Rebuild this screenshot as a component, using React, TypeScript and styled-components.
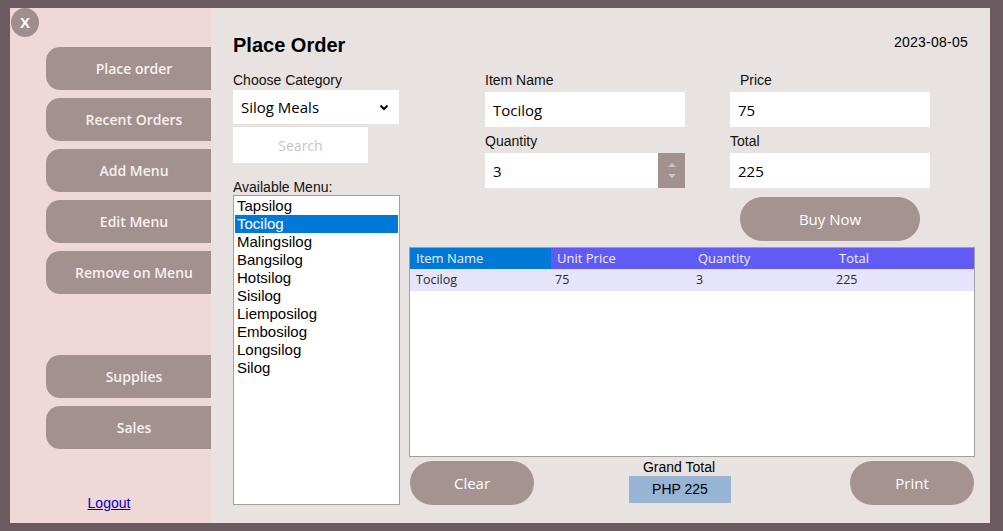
import React from "react";
import styled, { createGlobalStyle } from "styled-components";

const Global = createGlobalStyle`
  html, body { margin: 0; padding: 0; background: #6b5a5f; }
  * { box-sizing: border-box; }
`;

const Frame = styled.div`
  width: 1003px;
  height: 531px;
  background: #6b5a5f;
  padding: 8px 13px 8px 10px;
  display: flex;
  overflow: hidden;
`;

const Sidebar = styled.aside`
  width: 201px;
  flex: none;
  background: #efd8d5;
  display: flex;
  flex-direction: column;
  overflow: hidden;
`;

const CloseButton = styled.button`
  width: 28px;
  height: 29px;
  margin-left: 1px;
  border-radius: 50%;
  border: none;
  padding: 0;
  background: #a08e8e;
  color: #fff;
  font: bold 15px/29px "Liberation Sans", Arial, sans-serif;
  text-align: center;
`;

const NavList = styled.nav`
  display: flex;
  flex-direction: column;
  align-items: flex-start;
  gap: 8px;
  margin-top: 10px;
  padding-left: 36px;
`;

const NavButton = styled.button<{ $spaced?: boolean }>`
  flex: none;
  width: 176px;
  height: 43px;
  border: none;
  border-radius: 14px 0 0 14px;
  background: #a39190;
  color: #f8f0ef;
  font: 600 14px "Open Sans", sans-serif;
  padding: 0;
  margin-top: ${(p) => (p.$spaced ? "53px" : "0")};
`;

const LogoutLink = styled.a`
  margin-top: auto;
  padding-bottom: 12px;
  align-self: center;
  margin-left: -3px;
  font: 14px/16px "Liberation Sans", Arial, sans-serif;
  color: #0000c8;
  text-decoration: underline;
`;

const Main = styled.main`
  flex: 1;
  background: #e8e3e0;
  padding: 25px 15px 18px 22px;
  display: flex;
  flex-direction: column;
`;

const Header = styled.header`
  display: flex;
  justify-content: space-between;
  align-items: flex-start;
  height: 24px;
`;

const Title = styled.h1`
  margin: 0;
  font: bold 20px/24px "Liberation Sans", Arial, sans-serif;
  color: #000;
`;

const DateText = styled.span`
  margin: 1px 7px 0 0;
  font: 14px/16px "Liberation Sans", Arial, sans-serif;
  letter-spacing: 0.25px;
  color: #000;
`;

const Body = styled.div`
  display: flex;
  gap: 9px;
  margin-top: 15px;
  flex: 1;
  min-height: 0;
`;

const LeftCol = styled.section`
  width: 167px;
  flex: none;
  display: flex;
  flex-direction: column;
`;

const Label = styled.label<{ $indent?: number; $top?: number }>`
  display: block;
  font: 14px/16px "Liberation Sans", Arial, sans-serif;
  color: #111;
  padding-left: ${(p) => p.$indent ?? 0}px;
  margin-top: ${(p) => p.$top ?? 0}px;
`;

const SelectBox = styled.div`
  margin-top: 2px;
  width: 166px;
  height: 34px;
  background: #fff;
  display: flex;
  align-items: center;
  justify-content: space-between;
  padding: 0 10px 0 8px;
  font: 15px "Open Sans", sans-serif;
  color: #000;
`;

const SearchInput = styled.input`
  margin-top: 3px;
  width: 135px;
  height: 36px;
  border: none;
  background: #fff;
  text-align: center;
  font: 14px "Open Sans", sans-serif;
  outline: none;
  &::placeholder { color: #c4c4c4; }
`;

const MenuList = styled.ul`
  list-style: none;
  margin: 0;
  flex: 1;
  border: 1px solid #a0a0a0;
  background: #fff;
  padding: 1px;
`;

const MenuItem = styled.li<{ $selected?: boolean }>`
  height: 18px;
  padding-left: 2px;
  font: 15px/18px "Liberation Sans", Arial, sans-serif;
  background: ${(p) => (p.$selected ? "#0078d7" : "transparent")};
  color: ${(p) => (p.$selected ? "#fff" : "#000")};
`;

const RightCol = styled.section`
  width: 566px;
  flex: none;
  display: flex;
  flex-direction: column;
`;

const FormGrid = styled.div`
  display: grid;
  grid-template-columns: 200px 200px;
  column-gap: 45px;
  row-gap: 6px;
  padding-left: 76px;
`;

const Field = styled.div`
  display: flex;
  flex-direction: column;
  gap: 4px;
`;

const TextInput = styled.input`
  width: 100%;
  height: 35px;
  border: none;
  background: #fff;
  padding: 0 9px 0 8px;
  font: 15px "Open Sans", sans-serif;
  color: #000;
  outline: none;
`;

const NumberBox = styled.div`
  display: flex;
  width: 200px;
  height: 35px;
  background: #fff;
`;

const NumberInput = styled(TextInput)`
  flex: 1;
  width: auto;
  min-width: 0;
`;

const Spinner = styled.div`
  width: 27px;
  flex: none;
  background: #a39190;
  display: flex;
  flex-direction: column;
  align-items: center;
  justify-content: center;
  gap: 7px;
`;

const PillButton = styled.button<{ $w: number }>`
  width: ${(p) => p.$w}px;
  height: 44px;
  flex: none;
  border: none;
  border-radius: 22px;
  background: #a59391;
  color: #fff;
  font: 15px "Open Sans", sans-serif;
  padding: 0;
`;

const BuyRow = styled.div`
  margin-top: 9px;
  padding-left: 331px;
`;

const Table = styled.div`
  margin-top: 6px;
  height: 210px;
  border: 1px solid #a0a0a0;
  background: #fff;
`;

const TableRow = styled.div<{ $head?: boolean }>`
  display: grid;
  grid-template-columns: repeat(4, 141px);
  height: ${(p) => (p.$head ? 21 : 22)}px;
  background: ${(p) => (p.$head ? "#625af5" : "#e6e4fa")};
`;

const HeadCell = styled.div<{ $active?: boolean }>`
  padding-left: 6px;
  font: 13px/21px "Open Sans", sans-serif;
  color: #eeeeff;
  background: ${(p) => (p.$active ? "#0078d7" : "transparent")};
`;

const Cell = styled.div<{ $pad: number }>`
  padding-left: ${(p) => p.$pad}px;
  font: 12.5px/22px "Open Sans", sans-serif;
  color: #2a2a2a;
`;

const Footer = styled.div`
  margin-top: 2px;
  display: flex;
  align-items: flex-start;
`;

const FooterButton = styled(PillButton)`
  margin-top: 2px;
`;

const GrandBlock = styled.div`
  width: 102px;
  margin-left: 95px;
  text-align: center;
`;

const GrandLabel = styled.div`
  font: 14px/16px "Liberation Sans", Arial, sans-serif;
  color: #000;
  margin-left: -2px;
`;

const GrandValue = styled.div`
  margin-top: 1px;
  height: 27px;
  background: #98b4d4;
  font: 14px/27px "Liberation Sans", Arial, sans-serif;
  color: #000;
`;

const LeftSlot = styled.div`
  margin-left: 1px;
`;

const PushRight = styled.div`
  margin-left: auto;
  margin-right: 1px;
`;

const menu = [
  "Tapsilog",
  "Tocilog",
  "Malingsilog",
  "Bangsilog",
  "Hotsilog",
  "Sisilog",
  "Liemposilog",
  "Embosilog",
  "Longsilog",
  "Silog",
];

const Chevron = () => (
  <svg width="10" height="7" viewBox="0 0 10 7">
    <path d="M1.5 1.5 L5 5 L8.5 1.5" fill="none" stroke="#000" strokeWidth="2" />
  </svg>
);

const Tri = ({ up }: { up?: boolean }) => (
  <svg width="8" height="4" viewBox="0 0 8 4">
    <path d={up ? "M0 4 L4 0 L8 4 Z" : "M0 0 L4 4 L8 0 Z"} fill="#cfc4c4" />
  </svg>
);

export default function App() {
  return (
    <>
      <Global />
      <Frame>
        <Sidebar>
          <CloseButton>X</CloseButton>
          <NavList>
            <NavButton>Place order</NavButton>
            <NavButton>Recent Orders</NavButton>
            <NavButton>Add Menu</NavButton>
            <NavButton>Edit Menu</NavButton>
            <NavButton>Remove on Menu</NavButton>
            <NavButton $spaced>Supplies</NavButton>
            <NavButton>Sales</NavButton>
          </NavList>
          <LogoutLink href="#">Logout</LogoutLink>
        </Sidebar>
        <Main>
          <Header>
            <Title>Place Order</Title>
            <DateText>2023-08-05</DateText>
          </Header>
          <Body>
            <LeftCol>
              <Label>Choose Category</Label>
              <SelectBox>
                <span>Silog Meals</span>
                <Chevron />
              </SelectBox>
              <SearchInput placeholder="Search" />
              <Label $top={16}>Available Menu:</Label>
              <MenuList>
                {menu.map((m) => (
                  <MenuItem key={m} $selected={m === "Tocilog"}>
                    {m}
                  </MenuItem>
                ))}
              </MenuList>
            </LeftCol>
            <RightCol>
              <FormGrid>
                <Field>
                  <Label>Item Name</Label>
                  <TextInput readOnly value="Tocilog" />
                </Field>
                <Field>
                  <Label $indent={10}>Price</Label>
                  <TextInput readOnly value="75" />
                </Field>
                <Field>
                  <Label>Quantity</Label>
                  <NumberBox>
                    <NumberInput readOnly value="3" />
                    <Spinner>
                      <Tri up />
                      <Tri />
                    </Spinner>
                  </NumberBox>
                </Field>
                <Field>
                  <Label>Total</Label>
                  <TextInput readOnly value="225" />
                </Field>
              </FormGrid>
              <BuyRow>
                <PillButton $w={180}>Buy Now</PillButton>
              </BuyRow>
              <Table>
                <TableRow $head>
                  <HeadCell $active>Item Name</HeadCell>
                  <HeadCell>Unit Price</HeadCell>
                  <HeadCell>Quantity</HeadCell>
                  <HeadCell>Total</HeadCell>
                </TableRow>
                <TableRow>
                  <Cell $pad={6}>Tocilog</Cell>
                  <Cell $pad={4}>75</Cell>
                  <Cell $pad={4}>3</Cell>
                  <Cell $pad={3}>225</Cell>
                </TableRow>
              </Table>
              <Footer>
                <LeftSlot>
                  <FooterButton $w={124}>Clear</FooterButton>
                </LeftSlot>
                <GrandBlock>
                  <GrandLabel>Grand Total</GrandLabel>
                  <GrandValue>PHP 225</GrandValue>
                </GrandBlock>
                <PushRight>
                  <FooterButton $w={124}>Print</FooterButton>
                </PushRight>
              </Footer>
            </RightCol>
          </Body>
        </Main>
      </Frame>
    </>
  );
}
